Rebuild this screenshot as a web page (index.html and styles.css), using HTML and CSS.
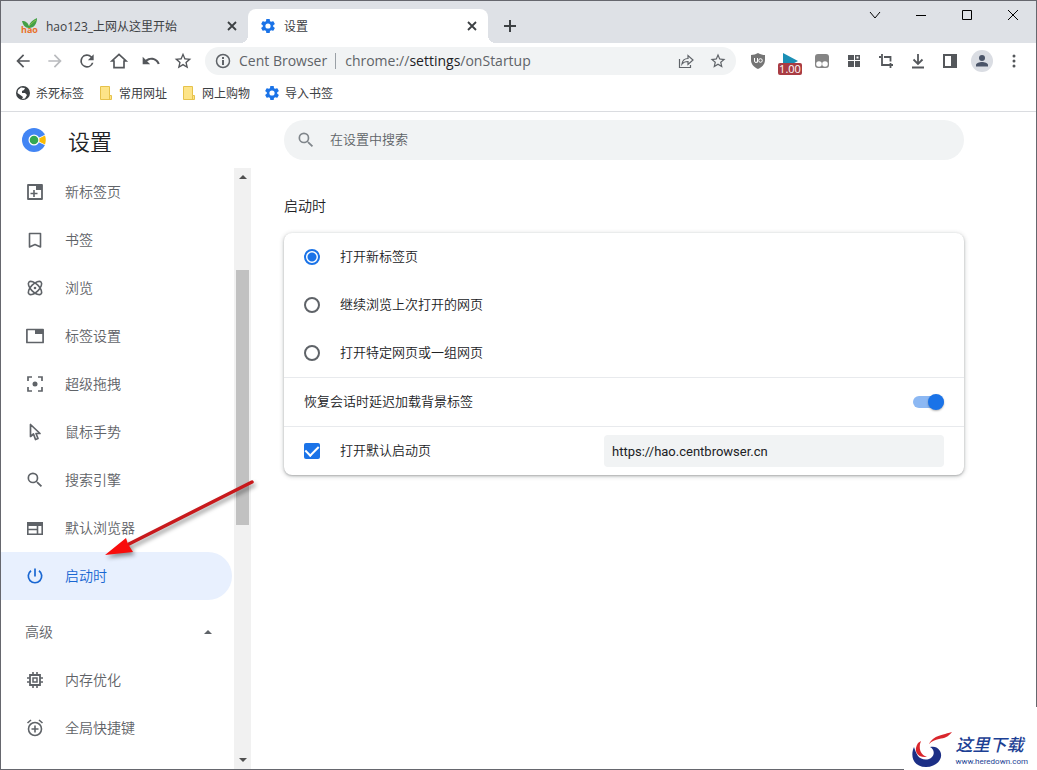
FILE: index.html
```html
<!DOCTYPE html>
<html lang="zh-CN">
<head>
    <meta charset="UTF-8">
    <meta name="viewport" content="width=device-width, initial-scale=1.0">
    <title>设置</title>
    <link rel="stylesheet" href="styles.css">
</head>
<body>
    <!-- Shared icons -->
    <svg class="sprite" aria-hidden="true">
        <symbol id="gear" viewBox="1 1 22 22"><path d="M19.14 12.94c.04-.3.06-.61.06-.94 0-.32-.02-.64-.07-.94l2.03-1.58c.18-.14.23-.41.12-.61l-1.92-3.32c-.12-.22-.37-.29-.59-.22l-2.39.96c-.5-.38-1.03-.7-1.62-.94L14.4 2.81c-.04-.24-.24-.41-.48-.41h-3.84c-.24 0-.43.17-.47.41L9.25 5.35C8.66 5.59 8.12 5.92 7.63 6.29L5.24 5.33c-.22-.08-.47 0-.59.22L2.74 8.87c-.12.21-.08.47.12.61l2.03 1.58C4.84 11.36 4.8 11.69 4.8 12s.02.64.07.94l-2.03 1.58c-.18.14-.23.41-.12.61l1.92 3.32c.12.22.37.29.59.22l2.39-.96c.5.38 1.03.7 1.62.94l.36 2.54c.05.24.24.41.48.41h3.84c.24 0 .44-.17.47-.41l.36-2.54c.59-.24 1.13-.56 1.62-.94l2.39.96c.22.08.47 0 .59-.22l1.92-3.32c.12-.22.07-.47-.12-.61zM12 15.6a3.6 3.6 0 1 1 0-7.2 3.6 3.6 0 0 1 0 7.2z"/></symbol>
        <symbol id="cross" viewBox="0 0 16 16"><path d="M4 4l8 8M12 4l-8 8" fill="none" stroke="currentColor" stroke-width="1.800"/></symbol>
        <symbol id="star" viewBox="0 0 24 24"><path d="M22 9.24l-7.19-.62L12 2 9.19 8.63 2 9.24l5.46 4.73L5.82 21 12 17.27 18.18 21l-1.63-7.03zM12 15.4l-3.76 2.27 1-4.28-3.32-2.88 4.38-.38L12 6.1l1.71 4.04 4.38.38-3.32 2.88 1 4.28z"/></symbol>
        <symbol id="magnifier" viewBox="0 0 24 24"><path d="M15.5 14h-.79l-.28-.27A6.47 6.47 0 0 0 16 9.5 6.5 6.5 0 1 0 9.5 16c1.61 0 3.09-.59 4.23-1.57l.27.28v.79l5 4.99L20.49 19zm-6 0a4.5 4.5 0 1 1 0-9 4.5 4.5 0 0 1 0 9z"/></symbol>
        <symbol id="folder" viewBox="0 0 16 16"><path d="M2.500 1.500h9v9h2v4h-11z" fill="#fde488" stroke="#e6c24b"/><path d="M11.500 10.500v4" stroke="#e6c24b"/></symbol>
    </svg>

    <div class="window">
        <header>
            <div class="tab-strip">
                <div class="tab">
                    <svg class="favicon" viewBox="0 0 18 18">
                        <path d="M2 4c4 0 6 2 7 5 1-4 4-6 8-8 0 6-3 10-8 10-4 0-6-3-7-7z" fill="#43a047"/>
                        <path d="M9 9c2-2 4-4 7-6" stroke="#8bc34a" fill="none"/>
                        <text x="1" y="16" class="hao-mark">hao</text>
                    </svg>
                    <span class="tab-title">hao123_上网从这里开始</span>
                    <button class="tab-close" aria-label="关闭"><svg class="icon16"><use href="#cross"/></svg></button>
                </div>
                <div class="tab active">
                    <svg class="icon16 blue"><use href="#gear"/></svg>
                    <span class="tab-title">设置</span>
                    <button class="tab-close" aria-label="关闭"><svg class="icon16"><use href="#cross"/></svg></button>
                </div>
                <button class="new-tab" aria-label="新标签页"><svg class="icon16" viewBox="0 0 16 16"><path d="M8 2v12M2 8h12" fill="none" stroke="currentColor" stroke-width="2"/></svg></button>
                <div class="window-controls">
                    <button aria-label="搜索标签页"><svg class="icon16" viewBox="0 0 16 16"><path d="M3 5l5 6 5-6"/></svg></button>
                    <button aria-label="最小化"><svg class="icon16" viewBox="0 0 16 16"><path d="M3 8.500h10"/></svg></button>
                    <button aria-label="最大化"><svg class="icon16" viewBox="0 0 16 16"><path d="M3.500 3.500h9v9h-9z"/></svg></button>
                    <button aria-label="关闭窗口"><svg class="icon16" viewBox="0 0 16 16"><path d="M3 3l10 10M13 3L3 13"/></svg></button>
                </div>
            </div>

            <div class="toolbar">
                <div class="tools">
                    <button aria-label="后退"><svg class="icon20" viewBox="0 0 24 24"><path d="M20 11H7.800l5.600-5.600L12 4l-8 8 8 8 1.400-1.400L7.800 13H20z"/></svg></button>
                    <button class="dim" aria-label="前进"><svg class="icon20" viewBox="0 0 24 24"><path d="M12 4l-1.400 1.400 5.600 5.600H4v2h12.200l-5.600 5.600L12 20l8-8z"/></svg></button>
                    <button aria-label="刷新"><svg class="icon20" viewBox="0 0 24 24"><path d="M17.650 6.350A8 8 0 1 0 19.730 14h-2.080A6 6 0 1 1 12 6c1.660 0 3.140.69 4.220 1.780L13 11h7V4z"/></svg></button>
                    <button aria-label="主页"><svg class="icon20" viewBox="0 0 24 24"><path d="M12 4l8.500 8H18v8H6v-8H3.500z" fill="none" stroke="currentColor" stroke-width="2"/></svg></button>
                    <button aria-label="撤销"><svg class="icon20" viewBox="0 0 24 24"><path d="M12.500 8c-2.650 0-5.050.99-6.900 2.600L2 7v9h9l-3.620-3.620c1.390-1.160 3.160-1.880 5.120-1.880 3.540 0 6.550 2.310 7.600 5.500l2.370-.78C21.080 11.030 17.150 8 12.500 8z"/></svg></button>
                    <button aria-label="收藏"><svg class="icon20"><use href="#star"/></svg></button>
                </div>
                <div class="omnibox">
                    <svg class="icon16" viewBox="0 0 16 16"><circle cx="8" cy="8" r="6.500" fill="none" stroke="currentColor" stroke-width="1.500"/><path d="M7 7h2v5H7zM7 4h2v2H7z"/></svg>
                    <span class="site">Cent Browser</span>
                    <span class="url">chrome://<b>settings</b>/onStartup</span>
                    <button aria-label="分享"><svg class="icon16" viewBox="0 0 16 16"><path d="M1.500 6v8.500h11V12M4 11c.5-4 3-5.500 6-5.500V2.500L15 7l-5 4.500v-3C7.500 8.500 5.500 9 4 11z" fill="none" stroke="currentColor" stroke-width="1.200"/></svg></button>
                    <button aria-label="添加书签"><svg class="icon18"><use href="#star"/></svg></button>
                </div>
                <div class="tools">
                    <button aria-label="uBlock"><svg class="icon16" viewBox="0 0 16 16"><path d="M8 0c2 1.300 4.500 2 7 2v5c0 4-2.500 7-7 9-4.500-2-7-5-7-9V2c2.500 0 5-.7 7-2z" fill="#757575"/><path d="M4.500 5v3q0 1.500 1.500 1.500T7.500 8V5v4.500" fill="none" stroke="#fff"/><circle cx="10.500" cy="7.500" r="1.800" fill="none" stroke="#fff"/></svg></button>
                    <button class="speed" aria-label="视频速度"><svg class="icon16" viewBox="0 0 16 16"><path d="M1 0l15 8-15 8z" fill="#1a8fb5"/></svg><span class="badge">1.00</span></button>
                    <button aria-label="脚本"><svg class="icon16" viewBox="0 0 16 16"><rect x="1" y="1" width="14" height="14" rx="3" fill="#858585"/><circle cx="5" cy="11" r="2.800" fill="#fff"/><circle cx="11" cy="11" r="2.800" fill="#fff"/></svg></button>
                    <button aria-label="扩展程序"><svg class="icon16" viewBox="0 0 16 16"><path d="M2 2h6v5H2zM2 8h6v6H2zM9 8h5v6H9z"/><path d="M9.750 2.750h3.500v3.500h-3.500z" fill="none" stroke="currentColor" stroke-width="1.500"/></svg></button>
                    <button aria-label="截图"><svg class="icon16" viewBox="0 0 16 16"><path d="M4 1v11h11M1 4h2M6 4h6.500v4.500M12.500 10v5" fill="none" stroke="currentColor" stroke-width="1.800"/></svg></button>
                    <button aria-label="下载"><svg class="icon16" viewBox="0 0 16 16"><path d="M8 1v9M3.500 6.500L8 11l4.500-4.500M2 14.500h12" fill="none" stroke="currentColor" stroke-width="1.800"/></svg></button>
                    <button aria-label="侧边栏"><svg class="icon16" viewBox="0 0 16 16"><path d="M1 1h14v14H1zm2 2v10h6V3z" fill-rule="evenodd"/></svg></button>
                    <button aria-label="用户"><svg class="icon22" viewBox="0 0 22 22"><circle cx="11" cy="11" r="11" fill="#dadde3"/><circle cx="11" cy="8" r="3" fill="#4a5468"/><path d="M5 16.500v-1.500c0-2 3.500-3 6-3s6 1 6 3v1.500z" fill="#4a5468"/></svg></button>
                    <button aria-label="菜单"><svg class="icon16" viewBox="0 0 16 16"><circle cx="8" cy="3" r="1.500"/><circle cx="8" cy="8" r="1.500"/><circle cx="8" cy="13" r="1.500"/></svg></button>
                </div>
            </div>

            <nav class="bookmarks">
                <a href="#"><svg class="icon16" viewBox="0 0 16 16"><circle cx="8" cy="8" r="7"/><path d="M3 5l3-2.500 4 .5-1 2-2 1v2l3 0 2 2-2 3.500-3 .5 1-2-2-1.500-3.500-2.500z" fill="#fff"/></svg>杀死标签</a>
                <a href="#"><svg class="icon16"><use href="#folder"/></svg>常用网址</a>
                <a href="#"><svg class="icon16"><use href="#folder"/></svg>网上购物</a>
                <a href="#"><svg class="icon16 blue"><use href="#gear"/></svg>导入书签</a>
            </nav>
        </header>

        <div class="page">
            <aside>
                <div class="brand">
                    <svg class="icon24" viewBox="0 0 24 24">
                        <circle cx="12" cy="12" r="12" fill="#4285f4"/>
                        <path d="M12 12L23.500 6.500a12 12 0 0 1 0 11z" fill="#fff"/>
                        <path d="M14 12l9-4.500q1.500 4.500 0 9z" fill="#fbbc05"/>
                        <circle cx="12" cy="12" r="5.500" fill="#fff"/>
                        <circle cx="12" cy="12" r="4.300" fill="#34a853"/>
                    </svg>
                    <h1>设置</h1>
                </div>
                <div class="menu-area">
                    <nav class="menu">
                        <a href="#"><svg class="icon20" viewBox="0 0 20 20"><path d="M3 3h14v14H3z" fill="none" stroke="currentColor" stroke-width="1.800" stroke-linejoin="round"/><path d="M11 3h6v5h-6z"/><path d="M9 8v7M5.500 11.500h7" fill="none" stroke="currentColor" stroke-width="1.600"/></svg>新标签页</a>
                        <a href="#"><svg class="icon20" viewBox="0 0 20 20"><path d="M4.500 3.500h11v13.500l-5.500-2.500-5.500 2.500z" fill="none" stroke="currentColor" stroke-width="1.600" stroke-linejoin="round"/></svg>书签</a>
                        <a href="#"><svg class="icon20" viewBox="0 0 20 20"><g fill="none" stroke="currentColor" stroke-width="1.600"><ellipse cx="10" cy="10" rx="8.500" ry="4" transform="rotate(45 10 10)"/><ellipse cx="10" cy="10" rx="8.500" ry="4" transform="rotate(-45 10 10)"/></g><circle cx="10" cy="10" r="1.300"/></svg>浏览</a>
                        <a href="#"><svg class="icon20" viewBox="0 0 20 20"><path d="M1.900 3.500h16.200v13H1.900z" fill="none" stroke="currentColor" stroke-width="1.700" stroke-linejoin="round"/><path d="M10 3h8v5h-8z"/></svg>标签设置</a>
                        <a href="#"><svg class="icon20" viewBox="0 0 20 20"><path d="M3 7V3h4M13 3h4v4M17 13v4h-4M7 17H3v-4" fill="none" stroke="currentColor" stroke-width="1.700"/><circle cx="10" cy="10" r="2.500"/></svg>超级拖拽</a>
                        <a href="#"><svg class="icon20" viewBox="0 0 20 20"><path d="M5.500 2.500v12l3-2.500 2 5.500 2.500-1-2-5h4z" fill="none" stroke="currentColor" stroke-width="1.700" stroke-linejoin="round"/></svg>鼠标手势</a>
                        <a href="#"><svg class="icon20"><use href="#magnifier"/></svg>搜索引擎</a>
                        <a href="#"><svg class="icon20" viewBox="0 0 20 20"><path d="M2.800 4.800h14.400v11.400H2.800zM3 11.500h9.500M12.500 8v8" fill="none" stroke="currentColor" stroke-width="1.600"/><path d="M2 4h16v4H2z"/></svg>默认浏览器</a>
                        <a href="#" class="selected"><svg class="icon20" viewBox="0 0 20 20"><path d="M10 2.500v8M6 4.700a6.700 6.700 0 1 0 8 0" fill="none" stroke="currentColor" stroke-width="1.700"/></svg>启动时</a>
                        <button class="advanced">高级<svg class="icon20" viewBox="0 0 20 20"><path d="M6 12l4-4 4 4z"/></svg></button>
                        <a href="#"><svg class="icon20" viewBox="0 0 20 20"><path d="M5 5h10v10H5z" fill="none" stroke="currentColor" stroke-width="1.800"/><path d="M8 8h4v4H8z" fill="none" stroke="currentColor" stroke-width="1.500"/><path d="M8 2v3M12 2v3M8 15v3M12 15v3M2 8h3M2 12h3M15 8h3M15 12h3" stroke="currentColor" stroke-width="1.600"/></svg>内存优化</a>
                        <a href="#"><svg class="icon20" viewBox="0 0 20 20"><circle cx="10" cy="11" r="6.500" fill="none" stroke="currentColor" stroke-width="1.600"/><path d="M10 7.500v7M6.500 11h7M2.500 5l3.500-3M17.500 5L14 2" stroke="currentColor" stroke-width="1.600"/></svg>全局快捷键</a>
                    </nav>
                    <div class="scrollbar">
                        <svg class="scroll-arrow" viewBox="0 0 17 17"><path d="M5 11l4-4 4 4z"/></svg>
                        <div class="track-top"></div>
                        <div class="thumb"></div>
                        <div class="track-bottom"></div>
                        <svg class="scroll-arrow" viewBox="0 0 17 17"><path d="M5 6l4 4 4-4z"/></svg>
                    </div>
                </div>
            </aside>

            <main>
                <div class="search">
                    <svg class="icon20"><use href="#magnifier"/></svg>
                    <input type="search" placeholder="在设置中搜索" aria-label="在设置中搜索">
                </div>
                <h2>启动时</h2>
                <form class="card">
                    <label class="row"><input type="radio" name="startup" checked>打开新标签页</label>
                    <label class="row"><input type="radio" name="startup">继续浏览上次打开的网页</label>
                    <label class="row"><input type="radio" name="startup">打开特定网页或一组网页</label>
                    <label class="row line">恢复会话时延迟加载背景标签<input type="checkbox" class="toggle" role="switch" checked></label>
                    <div class="row line">
                        <input type="checkbox" class="check" id="defaultPage" checked>
                        <label for="defaultPage">打开默认启动页</label>
                        <input type="text" class="page-url" value="https://hao.centbrowser.cn" aria-label="默认启动页">
                    </div>
                </form>
            </main>
        </div>
    </div>

    <!-- Arrow pointing at the selected menu item -->
    <svg class="pointer" viewBox="0 0 160 90" aria-hidden="true">
        <path d="M152 7L29 69" stroke="#c8191c" stroke-width="3.500" stroke-linecap="round"/>
        <path d="M5 80l21-17 2 6 5 8z" fill="#f80c0c"/>
    </svg>

    <div class="watermark">
        <svg viewBox="0 0 42 38" aria-hidden="true">
            <path d="M3 17c-4 9-1 20 12 20 11 0 18-9 14-16-2-4-6-5-10-4 4 2 5 7 2 10-4 4-11 3-14-1-2-3-3-6-4-9z" fill="#1c2f86"/>
            <path d="M7 13c-5 8-1 15 9 14-6-2-8-7-7-13l1-3z" fill="#d9262c"/>
            <path d="M18 14c5-8 9-8 23-12-4 5-7 6-13 7-4 1-7 2-10 5z" fill="#d9262c"/>
        </svg>
        <div>
            <strong>这里下载</strong>
            <span>www.heredown.com</span>
        </div>
    </div>
</body>
</html>
```

FILE: styles.css
```css
* {
    box-sizing: border-box;
}
body {
    font-family: "Open Sans", "Noto Sans CJK SC", sans-serif;
    font-size: 12px;
    color: #202124;
    margin: 0;
}
button {
    display: flex;
    align-items: center;
    justify-content: center;
    padding: 0;
    border: none;
    background: none;
    color: inherit;
    font: inherit;
}
a {
    color: inherit;
    text-decoration: none;
}
svg {
    fill: currentColor;
    flex-shrink: 0;
}
.sprite {
    display: none;
}
.icon16 {
    width: 16px;
    height: 16px;
}
.icon18 {
    width: 18px;
    height: 18px;
}
.icon20 {
    width: 20px;
    height: 20px;
}
.icon22 {
    width: 22px;
    height: 22px;
}
.icon24 {
    width: 24px;
    height: 24px;
}
.blue {
    color: #1a73e8;
}
.window {
    display: flex;
    flex-direction: column;
    height: 100vh;
    border: 1px solid #66676e;
    background: #fff;
}

/* Tabs */
.tab-strip {
    display: flex;
    height: 42px;
    padding: 8px 0 0 7px;
    background: #dee1e6;
    color: #3c4043;
}
.tab {
    display: flex;
    align-items: center;
    gap: 8px;
    width: 240px;
    padding: 0 8px 0 12px;
}
.tab.active {
    position: relative;
    background: #fff;
    border-radius: 8px 8px 0 0;
}
.tab.active::before,
.tab.active::after {
    content: "";
    position: absolute;
    bottom: 0;
    width: 8px;
    height: 8px;
}
.tab.active::before {
    right: 100%;
    background: radial-gradient(circle at 0 0, transparent 8px, #fff 8px);
}
.tab.active::after {
    left: 100%;
    background: radial-gradient(circle at 100% 0, transparent 8px, #fff 8px);
}
.favicon {
    width: 18px;
    height: 18px;
}
.hao-mark {
    font-size: 9px;
    font-weight: bold;
    fill: #e8702a;
}
.tab-title {
    flex: 1;
}
.new-tab {
    width: 44px;
}
.window-controls {
    display: flex;
    height: 28px;
    margin: -8px 0 0 auto;
    color: #000;
}
.window-controls button {
    width: 46px;
}
.window-controls path {
    fill: none;
    stroke: currentColor;
}

/* Toolbar */
.toolbar {
    display: flex;
    align-items: center;
    gap: 6px;
    height: 36px;
    padding: 0 6px;
    color: #54575b;
}
.tools {
    display: flex;
}
.tools button {
    width: 32px;
    height: 32px;
}
.tools .dim {
    color: #b9bbbe;
}
.omnibox {
    display: flex;
    flex: 1;
    align-items: center;
    height: 28px;
    padding: 0 2px 0 10px;
    border-radius: 14px;
    background: #f1f3f4;
    font-size: 14px;
    line-height: 16px;
    color: #5f6368;
}
.site {
    margin-left: 8px;
    padding-right: 8px;
    border-right: 1px solid #9aa0a6;
}
.url {
    flex: 1;
    margin-left: 9px;
}
.url b {
    font-weight: normal;
    color: #202124;
}
.omnibox button {
    width: 32px;
    height: 28px;
}
.speed {
    position: relative;
}
.badge {
    position: absolute;
    left: 4px;
    top: 18px;
    width: 24px;
    border-radius: 2px;
    background: #a93c43;
    color: #fff;
    font-size: 11px;
    line-height: 12px;
    text-align: center;
}
.bookmarks {
    display: flex;
    gap: 14px;
    height: 33px;
    padding: 0 14px 4px;
    border-bottom: 1px solid #dadce0;
    color: #3c4043;
}
.bookmarks a {
    display: flex;
    align-items: center;
    gap: 5px;
}

/* Settings menu */
.page {
    display: flex;
    flex: 1;
    min-height: 0;
    font-family: Roboto, "Noto Sans CJK SC", sans-serif;
    font-weight: 350;
    line-height: 20px;
}
aside {
    display: flex;
    flex-direction: column;
    width: 250px;
    flex-shrink: 0;
}
.brand {
    display: flex;
    align-items: center;
    gap: 22px;
    height: 56px;
    padding-left: 21px;
}
.brand h1 {
    margin: 0;
    font-size: 22px;
    font-weight: inherit;
    line-height: normal;
}
.menu-area {
    display: flex;
    flex: 1;
    min-height: 0;
}
.menu {
    flex: 1;
    overflow: hidden;
    color: #5f6368;
    font-size: 14px;
}
.menu a {
    display: flex;
    align-items: center;
    gap: 20px;
    height: 48px;
    margin-right: 2px;
    padding-left: 24px;
}
.menu .selected {
    border-radius: 0 24px 24px 0;
    background: #e8f0fe;
    color: #1967d2;
}
.advanced {
    justify-content: space-between;
    width: 100%;
    height: 48px;
    margin-top: 8px;
    padding: 0 16px 0 24px;
}
.scrollbar {
    display: flex;
    flex-direction: column;
    width: 17px;
    background: #f1f1f1;
    color: #505050;
}
.scroll-arrow {
    height: 17px;
}
.track-top {
    flex: 85;
}
.thumb {
    flex: 255;
    margin: 0 2px;
    background: #c1c1c1;
}
.track-bottom {
    flex: 227;
}

/* Settings content */
main {
    flex: 1;
    max-width: 785px;
    padding: 8px 72px 0 33px;
    font-size: 13px;
}
.search {
    display: flex;
    align-items: center;
    gap: 12px;
    height: 40px;
    padding: 0 12px;
    border-radius: 20px;
    background: #f1f3f4;
    color: #80868b;
}
.search input {
    flex: 1;
    height: 20px;
    padding: 0 2px;
    border: none;
    outline: none;
    background: none;
    font: inherit;
}
.search input[type="search"] {
    appearance: none;
}
.search input::placeholder {
    color: #5f6368;
}
main h2 {
    margin: 36px 0 17px;
    font-size: 14px;
    font-weight: inherit;
}
.card {
    border-radius: 8px;
    box-shadow: 0 1px 2px rgba(60, 64, 67, 0.3), 0 1px 4px 1px rgba(60, 64, 67, 0.2);
}
.row {
    display: flex;
    align-items: center;
    height: 48px;
    padding: 0 20px;
}
.line {
    height: 49px;
    border-top: 1px solid #e8eaed;
}
.row input {
    appearance: none;
    margin: 0;
}
.row input[type="radio"] {
    width: 16px;
    height: 16px;
    margin-right: 20px;
    border: 2px solid #5f6368;
    border-radius: 50%;
}
.row input[type="radio"]:checked {
    border-color: #1a73e8;
    background: radial-gradient(circle, #1a73e8 4px, #fff 5px);
}
.row .toggle {
    display: flex;
    align-items: center;
    justify-content: flex-end;
    width: 31px;
    height: 12px;
    margin-left: auto;
    border-radius: 6px;
    background: #8cb8f3;
}
.toggle::before {
    content: "";
    width: 16px;
    height: 16px;
    flex-shrink: 0;
    border-radius: 50%;
    background: #1a73e8;
    box-shadow: 0 1px 2px rgba(0, 0, 0, 0.3);
}
.row .check {
    display: flex;
    align-items: center;
    justify-content: center;
    width: 16px;
    height: 16px;
    margin-right: 20px;
    border-radius: 2px;
    background: #1a73e8;
}
.check::before {
    content: "";
    width: 6px;
    height: 11px;
    margin-bottom: 3px;
    border: solid #fff;
    border-width: 0 2px 2px 0;
    transform: rotate(45deg);
}
.row .page-url {
    width: 340px;
    max-width: 60%;
    height: 32px;
    margin-left: auto;
    padding: 0 8px;
    border: none;
    border-radius: 4px;
    background: #f1f3f4;
    color: #202124;
    font: inherit;
    font-weight: normal;
}

.pointer {
    position: absolute;
    left: 100px;
    top: 475px;
    width: 160px;
    height: 90px;
    filter: drop-shadow(2px 3px 2px rgba(0, 0, 0, 0.4));
}
.watermark {
    position: absolute;
    right: 0;
    bottom: 0;
    display: flex;
    align-items: flex-end;
    gap: 2px;
    height: 63px;
    padding: 0 9px 2px 7px;
    background: #fff;
    color: #1c3f94;
}
.watermark svg {
    width: 42px;
    height: 38px;
}
.watermark div {
    display: flex;
    flex-direction: column;
}
.watermark strong {
    font-size: 17px;
    font-weight: 500;
    font-style: italic;
    line-height: 22px;
}
.watermark span {
    font-family: Roboto, sans-serif;
    font-size: 8px;
    line-height: 12px;
}
```
